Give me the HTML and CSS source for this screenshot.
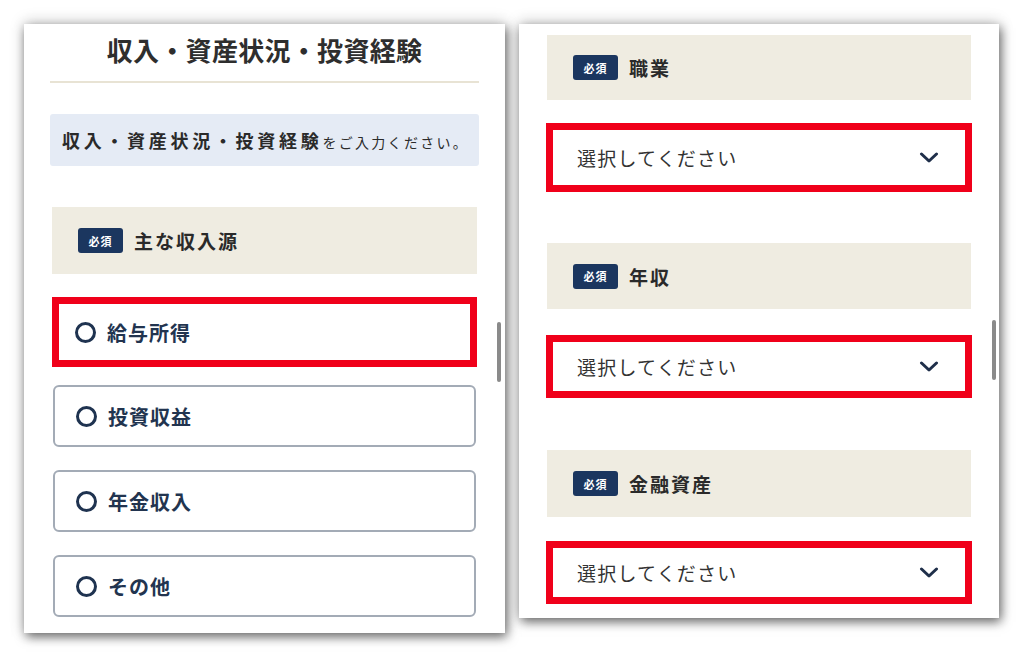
FILE: index.html
```html
<!DOCTYPE html>
<html lang="ja">
<head>
<meta charset="utf-8">
<title>収入・資産状況・投資経験</title>
<link rel="stylesheet" href="styles.css">
</head>
<body>
<div class="stage">
  <section class="panel panel-left">
    <h1 class="title">収入・資産状況・投資経験</h1>
    <div class="divider"></div>
    <div class="info"><strong>収入・資産状況・投資経験</strong><span class="info-small">をご入力ください。</span></div>
    <div class="field-head head-income"><span class="badge">必須</span><span class="field-label">主な収入源</span></div>
    <div class="options">
      <div class="option option-marked"><span class="radio"></span><span class="option-text">給与所得</span></div>
      <div class="option option-2"><span class="radio"></span><span class="option-text">投資収益</span></div>
      <div class="option"><span class="radio"></span><span class="option-text">年金収入</span></div>
      <div class="option"><span class="radio"></span><span class="option-text">その他</span></div>
    </div>
    <div class="scroll-thumb thumb-left"></div>
  </section>
  <section class="panel panel-right">
    <div class="group group-1">
      <div class="field-head"><span class="badge">必須</span><span class="field-label">職業</span></div>
      <div class="select select-1"><span class="select-text">選択してください</span><svg class="chevron" width="20" height="12" viewBox="0 0 20 12"><polyline points="2.5,2 10,9 17.5,2" fill="none" stroke="#1f2f4a" stroke-width="3" stroke-linecap="round" stroke-linejoin="round"/></svg></div>
    </div>
    <div class="group group-2">
      <div class="field-head"><span class="badge">必須</span><span class="field-label">年収</span></div>
      <div class="select"><span class="select-text">選択してください</span><svg class="chevron" width="20" height="12" viewBox="0 0 20 12"><polyline points="2.5,2 10,9 17.5,2" fill="none" stroke="#1f2f4a" stroke-width="3" stroke-linecap="round" stroke-linejoin="round"/></svg></div>
    </div>
    <div class="group group-3">
      <div class="field-head"><span class="badge">必須</span><span class="field-label">金融資産</span></div>
      <div class="select"><span class="select-text">選択してください</span><svg class="chevron" width="20" height="12" viewBox="0 0 20 12"><polyline points="2.5,2 10,9 17.5,2" fill="none" stroke="#1f2f4a" stroke-width="3" stroke-linecap="round" stroke-linejoin="round"/></svg></div>
    </div>
    <div class="scroll-thumb thumb-right"></div>
  </section>
</div>
</body>
</html>
```

FILE: styles.css
```css
* { box-sizing: border-box; }
html, body { margin: 0; padding: 0; background: #ffffff; }
body {
  font-family: "Noto Sans CJK JP", "Noto Sans", sans-serif;
  color: #2b2b2b;
  width: 1024px;
  height: 657px;
  overflow: hidden;
}
.stage {
  display: flex;
  align-items: flex-start;
  padding: 24px 0 0 24px;
  gap: 14px;
}
.panel {
  position: relative;
  background: #ffffff;
  box-shadow: 2px 4px 10px rgba(0,0,0,0.55), 0 -2px 14px rgba(0,0,0,0.18);
}
.panel-left {
  width: 481px;
  height: 609px;
  display: flex;
  flex-direction: column;
}
.panel-right {
  width: 480px;
  height: 594px;
  padding: 11px 28px 0 28px;
}
.title {
  margin: 0;
  height: 57px;
  font-size: 26px;
  font-weight: 700;
  color: #2e2e2e;
  text-align: center;
  line-height: 52px;
  letter-spacing: 0.3px;
}
.divider {
  height: 2px;
  margin: 0 26px;
  background: #e8e3d4;
}
.info {
  margin: 31px 26px 0 26px;
  height: 52px;
  background: #e5ebf5;
  border-radius: 3px;
  display: flex;
  align-items: center;
  padding-left: 12px;
  white-space: nowrap;
}
.info strong {
  font-size: 18px;
  font-weight: 700;
  letter-spacing: 3.7px;
  color: #2a2a2a;
}
.info-small {
  font-size: 14px;
  letter-spacing: 2.3px;
  color: #2a2a2a;
  padding-top: 3px;
}
.field-head {
  height: 66px;
  background: #efece1;
  display: flex;
  align-items: center;
  padding-left: 26px;
}
.head-income {
  margin: 41px 28px 0 28px;
  height: 67px;
}
.badge {
  width: 45px;
  height: 25px;
  border-radius: 3px;
  background: #1b365f;
  color: #ffffff;
  font-size: 11px;
  font-weight: 700;
  letter-spacing: 1px;
  display: flex;
  align-items: center;
  justify-content: center;
}
.field-label {
  margin-left: 11px;
  font-size: 19px;
  font-weight: 700;
  letter-spacing: 2px;
  color: #2a2a2a;
}
.options {
  margin: 23px 28px 0 28px;
  display: flex;
  flex-direction: column;
  gap: 23px;
}
.option {
  height: 62px;
  border: 2px solid #a3abb6;
  border-radius: 6px;
  margin: 0 1px;
  display: flex;
  align-items: center;
  padding-left: 21px;
}
.option-marked {
  height: 70px;
  margin: 0;
  border: 7px solid #f0001a;
  border-radius: 0;
  padding-left: 16px;
}
.option-2 { margin-top: -5px; }
.radio {
  width: 21px;
  height: 21px;
  border: 3px solid #1f3350;
  border-radius: 50%;
  flex: none;
}
.option-text {
  margin-left: 11px;
  font-size: 20px;
  font-weight: 700;
  letter-spacing: 1px;
  color: #22344f;
}
.group { display: flex; flex-direction: column; }
.group-2 { margin-top: 51px; }
.group-3 { margin-top: 52px; }
.group-1 .field-head { height: 65px; }
.group-3 .field-head { height: 67px; }
.select {
  margin-top: 26px;
  height: 63px;
  border: 7px solid #f0001a;
  display: flex;
  align-items: center;
  justify-content: space-between;
  padding: 0 26px 0 24px;
  margin-left: -1px;
  margin-right: -1px;
}
.group-1 .select { margin-top: 23px; height: 69px; }
.group-3 .select { margin-top: 24px; }
.select-text {
  font-size: 19px;
  font-weight: 400;
  letter-spacing: 1.2px;
  color: #333333;
}
.chevron { display: block; }
.scroll-thumb {
  position: absolute;
  width: 4px;
  height: 60px;
  border-radius: 2px;
  background: #8a8a8a;
}
.thumb-left { left: 473px; top: 298px; }
.thumb-right { left: 473px; top: 296px; }
```
